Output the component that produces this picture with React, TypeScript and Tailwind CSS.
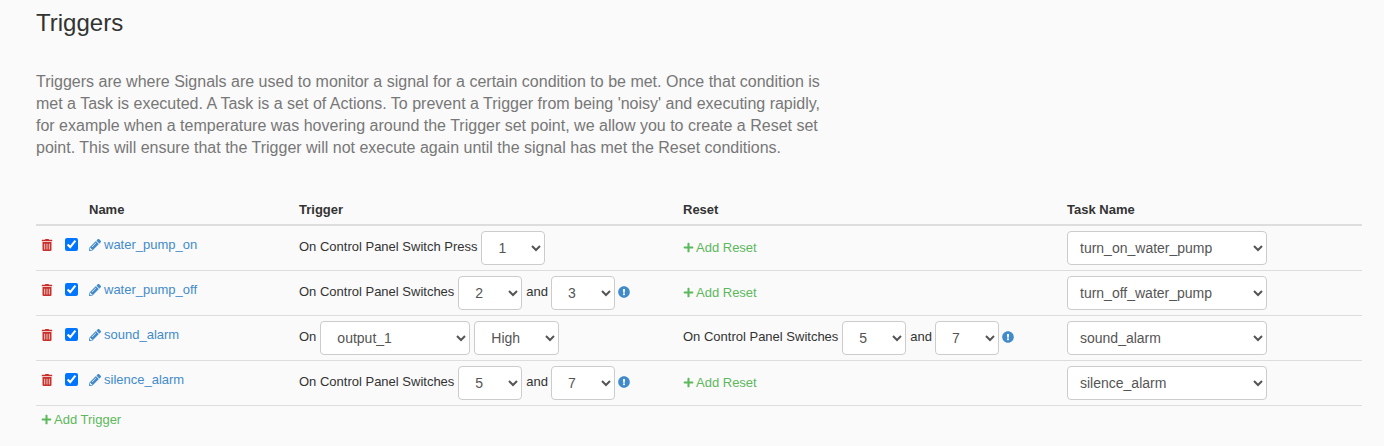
import { FaExclamationCircle, FaPencilAlt, FaPlus, FaTrashAlt } from 'react-icons/fa';

interface SelectProps {
  value: string;
  className: string;
}

function Select({ value, className }: SelectProps) {
  return (
    <select
      defaultValue={value}
      className={`h-[34px] rounded-[4px] border border-[#ccc] bg-white align-middle text-[14px] text-[#555] ${className}`}
    >
      <option>{value}</option>
    </select>
  );
}

function Switches({ a, b }: { a: string; b: string }) {
  return (
    <div className="flex items-center">
      <span className="mr-[4px] -mt-[2px]">On Control Panel Switches</span>
      <Select value={a} className="w-[64px] px-3" />
      <span className="ml-[4px] mr-[3px] -mt-[2px]">and</span>
      <Select value={b} className="w-[64px] px-3" />
      <FaExclamationCircle className="ml-[3px] -mt-[2px] text-[12px] text-[#428bca]" />
    </div>
  );
}

function AddLink({ label }: { label: string }) {
  return (
    <span className="flex items-center text-[13px] text-[#5cb85c]">
      <FaPlus className="mr-[2px] text-[11px]" />
      {label}
    </span>
  );
}

const rows = [
  {
    name: 'water_pump_on',
    task: 'turn_on_water_pump',
    trigger: (
      <div className="flex items-center">
        <span className="mr-[4px] -mt-[2px]">On Control Panel Switch Press</span>
        <Select value="1" className="w-[64px] px-3" />
      </div>
    ),
    reset: <AddLink label="Add Reset" />,
  },
  {
    name: 'water_pump_off',
    task: 'turn_off_water_pump',
    trigger: <Switches a="2" b="3" />,
    reset: <AddLink label="Add Reset" />,
  },
  {
    name: 'sound_alarm',
    task: 'sound_alarm',
    trigger: (
      <div className="flex items-center">
        <span className="mr-[4px] -mt-[2px]">On</span>
        <Select value="output_1" className="w-[150px] px-3" />
        <Select value="High" className="ml-[4px] w-[85px] px-3" />
      </div>
    ),
    reset: <Switches a="5" b="7" />,
  },
  {
    name: 'silence_alarm',
    task: 'silence_alarm',
    trigger: <Switches a="5" b="7" />,
    reset: <AddLink label="Add Reset" />,
  },
];

export default function App() {
  return (
    <div className="h-[446px] overflow-hidden bg-[#fafafa] pl-[36px] pr-[22px] font-['Liberation_Sans',Arial,sans-serif] text-[#333]">
      <h1 className="pt-[10px] text-[24px] leading-[26px] font-normal">Triggers</h1>
      <p className="mt-[35px] w-[800px] text-[16px] leading-[22px] text-[#777]">
        Triggers are where Signals are used to monitor a signal for a certain condition to be met. Once that condition is
        met a Task is executed. A Task is a set of Actions. To prevent a Trigger from being 'noisy' and executing rapidly,
        for example when a temperature was hovering around the Trigger set point, we allow you to create a Reset set
        point. This will ensure that the Trigger will not execute again until the signal has met the Reset conditions.
      </p>

      <table className="mt-[35px] w-full table-fixed border-collapse text-[13px]">
        <colgroup>
          <col className="w-[24px]" />
          <col className="w-[25px]" />
          <col className="w-[210px]" />
          <col className="w-[384px]" />
          <col className="w-[384px]" />
          <col />
        </colgroup>
        <thead>
          <tr className="h-[31px] border-b-2 border-[#ddd] text-left">
            <th />
            <th />
            <th className="px-[4px] pt-[2px] font-bold">Name</th>
            <th className="px-[4px] pt-[2px] font-bold">Trigger</th>
            <th className="px-[4px] pt-[2px] font-bold">Reset</th>
            <th className="px-[4px] pt-[2px] font-bold">Task Name</th>
          </tr>
        </thead>
        <tbody>
          {rows.map((row) => (
            <tr key={row.name} className="h-[45px] border-b border-[#ddd]">
              <td className="pl-[5px]">
                <FaTrashAlt className="-mt-[6px] text-[12px] text-[#c9302c]" />
              </td>
              <td className="pl-[5px]">
                <input type="checkbox" defaultChecked className="-mt-[6px] block h-[13px] w-[13px] accent-[#0075ff]" />
              </td>
              <td className="px-[4px]">
                <div className="-mt-[6px] flex items-center text-[13px] text-[#428bca]">
                  <FaPencilAlt className="mr-[3px] text-[12px]" />
                  {row.name}
                </div>
              </td>
              <td className="px-[4px]">{row.trigger}</td>
              <td className="px-[4px]">{row.reset}</td>
              <td className="px-[4px]">
                <Select value={row.task} className="w-[200px] px-2" />
              </td>
            </tr>
          ))}
        </tbody>
      </table>

      <div className="mt-[4px] pl-[5px]">
        <AddLink label="Add Trigger" />
      </div>
    </div>
  );
}
